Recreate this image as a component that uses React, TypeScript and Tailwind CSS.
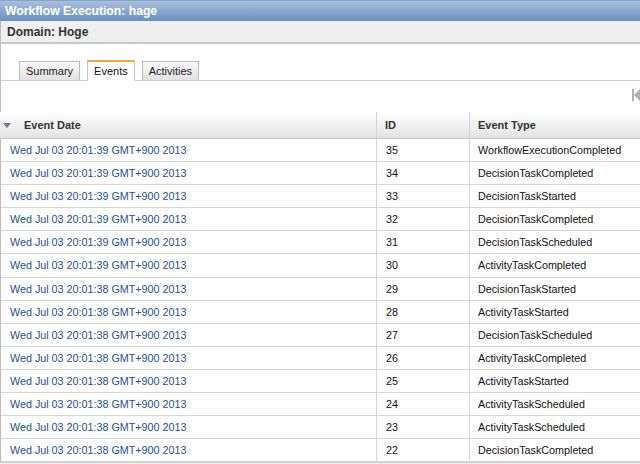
import React from "react";

const rows: [string, number, string][] = [
  ["Wed Jul 03 20:01:39 GMT+900 2013", 35, "WorkflowExecutionCompleted"],
  ["Wed Jul 03 20:01:39 GMT+900 2013", 34, "DecisionTaskCompleted"],
  ["Wed Jul 03 20:01:39 GMT+900 2013", 33, "DecisionTaskStarted"],
  ["Wed Jul 03 20:01:39 GMT+900 2013", 32, "DecisionTaskCompleted"],
  ["Wed Jul 03 20:01:39 GMT+900 2013", 31, "DecisionTaskScheduled"],
  ["Wed Jul 03 20:01:39 GMT+900 2013", 30, "ActivityTaskCompleted"],
  ["Wed Jul 03 20:01:38 GMT+900 2013", 29, "DecisionTaskStarted"],
  ["Wed Jul 03 20:01:38 GMT+900 2013", 28, "ActivityTaskStarted"],
  ["Wed Jul 03 20:01:38 GMT+900 2013", 27, "DecisionTaskScheduled"],
  ["Wed Jul 03 20:01:38 GMT+900 2013", 26, "ActivityTaskCompleted"],
  ["Wed Jul 03 20:01:38 GMT+900 2013", 25, "ActivityTaskStarted"],
  ["Wed Jul 03 20:01:38 GMT+900 2013", 24, "ActivityTaskScheduled"],
  ["Wed Jul 03 20:01:38 GMT+900 2013", 23, "ActivityTaskScheduled"],
  ["Wed Jul 03 20:01:38 GMT+900 2013", 22, "DecisionTaskCompleted"],
];

function Tab({ label, active }: { label: string; active?: boolean }) {
  return active ? (
    <div className="h-[21px] px-[6px] mb-[-1px] flex items-center bg-white border border-[#c8c8c8] border-b-white border-t-2 border-t-[#f5a43c] text-[11px] text-[#111]">
      {label}
    </div>
  ) : (
    <div className="h-[19px] px-[6px] flex items-center bg-gradient-to-b from-[#fafafa] to-[#e2e2e2] border border-[#bcbcbc] border-b-0 text-[11px] text-[#222]">
      {label}
    </div>
  );
}

export default function App() {
  return (
    <div
      className="w-[640px] h-[464px] overflow-hidden bg-white flex flex-col"
      style={{ fontFamily: '"Liberation Sans", Arial, sans-serif' }}
    >
      {/* title bar */}
      <div className="h-[21px] shrink-0 flex items-center px-[5px] bg-gradient-to-b from-[#a9bfdc] to-[#6b90c0] border-t border-[#8aa3c4]">
        <span className="text-white font-bold text-[12.2px]">Workflow Execution: hage</span>
      </div>

      {/* domain */}
      <div className="h-[23px] shrink-0 flex items-center px-[6px] bg-[#efefef] border-b-2 border-[#c9c9c9] border-l border-l-[#bdbdbd]">
        <span className="text-[#333] font-bold text-[12px]">Domain: Hoge</span>
      </div>

      {/* tabs */}
      <div className="h-[37px] shrink-0 flex items-end gap-[7px] pl-[18px] border-b border-[#cfcfcf] border-l border-l-[#bdbdbd]">
        <Tab label="Summary" />
        <Tab label="Events" active />
        <Tab label="Activities" />
      </div>

      {/* toolbar */}
      <div className="h-[31px] shrink-0 flex items-start justify-end pt-[7px] border-l border-[#bdbdbd]">
        <div className="flex items-center h-[13px]">
          <div className="w-[2px] h-[12px] bg-[#b0b0b0]" />
          <div className="w-0 h-0 border-y-[6px] border-y-transparent border-r-[6px] border-r-[#b0b0b0]" />
        </div>
      </div>

      {/* header */}
      <div className="h-[27px] shrink-0 flex bg-gradient-to-b from-[#ffffff] to-[#e3e3e3] border-b border-[#c9c9c9] text-[11px] font-bold text-[#333]">
        <div className="w-[376px] flex items-center">
          <div className="ml-[3px] w-0 h-0 border-x-[4px] border-x-transparent border-t-[5px] border-t-[#6c7a8a]" />
          <span className="ml-[13px]">Event Date</span>
        </div>
        <div className="w-[93px] flex items-center pl-[8px] border-l border-[#d3d3d3]">ID</div>
        <div className="flex-1 flex items-center pl-[8px] border-l border-[#d3d3d3]">Event Type</div>
      </div>

      {/* rows */}
      <div className="shrink-0 border-l border-[#bdbdbd]">
        {rows.map(([date, id, type]) => (
          <div key={id} className="h-[23.1px] flex border-b border-[#d6d6d6] text-[10.75px]">
            <div className="w-[375px] flex items-center pl-[9px] text-[#1f4f95]">{date}</div>
            <div className="w-[93px] flex items-center pl-[9px] border-l border-[#d6d6d6] text-[#111]">{id}</div>
            <div className="flex-1 flex items-center pl-[8px] border-l border-[#d6d6d6] text-[#111]">{type}</div>
          </div>
        ))}
      </div>

      {/* resize bar */}
      <div className="flex-1 bg-[#f0f0f0] border-t border-[#cfcfcf] flex justify-center items-start gap-[2px] pl-[12px] pt-[1px]">
        <div className="w-px h-[2px] bg-[#aaa]" />
        <div className="w-px h-[2px] bg-[#aaa]" />
        <div className="w-px h-[2px] bg-[#aaa]" />
        <div className="w-px h-[2px] bg-[#aaa]" />
      </div>
    </div>
  );
}
